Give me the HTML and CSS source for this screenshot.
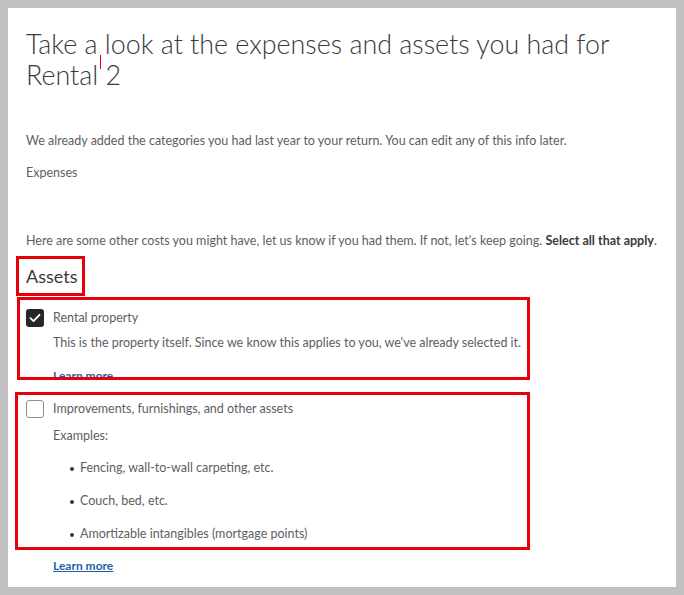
FILE: index.html
```html
<!DOCTYPE html>
<html lang="en">
<head>
  <meta charset="UTF-8">
  <title>Rental 2 - Expenses and assets</title>
  <link rel="stylesheet" href="styles.css">
</head>
<body>

<div class="panel">
  <h1 class="title">Take a look at the expenses and assets you had for Rental<span class="caret"></span> 2</h1>

  <p class="intro">We already added the categories you had last year to your return. You can edit any of this info later.</p>
  <p class="section-label">Expenses</p>

  <p class="other-costs">Here are some other costs you might have, let us know if you had them. If not, let's keep going. <strong>Select all that apply</strong>.</p>

  <h2 class="assets-heading marked">Assets</h2>

  <div class="choice choice-first marked">
    <span class="checkbox checked">
      <svg viewBox="0 0 18 18" width="18" height="18"><path d="M4.5 9.2l3 3 6-6.4" fill="none" stroke="#fff" stroke-width="1.8" stroke-linecap="round" stroke-linejoin="round"/></svg>
    </span>
    <div class="choice-body">
      <div class="choice-label">Rental property</div>
      <div class="choice-desc">This is the property itself. Since we know this applies to you, we've already selected it.</div>
      <a class="learn-more" href="#">Learn more</a>
    </div>
  </div>

  <div class="choice choice-second marked">
    <span class="checkbox"></span>
    <div class="choice-body">
      <div class="choice-label">Improvements, furnishings, and other assets</div>
      <div class="choice-desc">Examples:</div>
      <ul class="examples">
        <li>Fencing, wall-to-wall carpeting, etc.</li>
        <li>Couch, bed, etc.</li>
        <li>Amortizable intangibles (mortgage points)</li>
      </ul>
    </div>
  </div>

  <a class="learn-more learn-bottom" href="#">Learn more</a>
</div>

</body>
</html>
```

FILE: styles.css
```css
body {
  margin: 0;
  padding: 8px;
  background: #c0c0c0;
  font-family: Lato, "Open Sans", sans-serif;
  color: #5d5e63;
}
.panel {
  background: #ffffff;
  height: 579px;
  box-sizing: border-box;
  padding: 20px 18px 0;
  overflow: hidden;
}
.title {
  position: relative;
  margin: 0;
  font-size: 26.85px;
  font-weight: 300;
  line-height: 31px;
  color: #393a3d;
}
.caret {
  position: absolute;
  left: 74px;
  top: 27px;
  width: 1px;
  height: 14px;
  background: #e6000a;
}
p {
  margin: 0;
  font-size: 12.5px;
  line-height: 20px;
}
.intro {
  margin-top: 41px;
}
.section-label {
  margin-top: 12px;
}
.other-costs {
  margin-top: 48px;
  white-space: nowrap;
}
.other-costs strong {
  color: #393a3d;
  font-weight: 700;
}
.marked {
  position: relative;
}
.marked::after {
  content: "";
  position: absolute;
  border: 3px solid #e6000a;
  pointer-events: none;
}
.assets-heading {
  display: inline-block;
  margin: 13px 0 0;
  font-size: 18px;
  font-weight: 400;
  line-height: 24px;
  color: #393a3d;
}
.assets-heading::after {
  top: -8px;
  left: -10px;
  right: -8px;
  bottom: -8px;
}
.choice {
  display: flex;
  gap: 9px;
  box-sizing: border-box;
  width: 513px;
  overflow: hidden;
}
.choice::after {
  top: 0;
  left: 0;
  right: 0;
  bottom: 0;
}
.choice-first {
  margin: 9px 0 0 -9px;
  height: 83px;
  padding: 11px 0 0 9px;
}
.choice-second {
  margin: 12px 0 0 -11px;
  width: 515px;
  height: 158px;
  padding: 7px 0 0 11px;
}
.checkbox {
  flex: none;
  width: 18px;
  height: 18px;
  margin-top: 1px;
  box-sizing: border-box;
  border-radius: 3px;
  border: 1.5px solid #8d9096;
  background: #fff;
}
.checkbox.checked {
  border: none;
  background: #25272b;
}
.checkbox svg {
  display: block;
}
.choice-label {
  font-size: 12.5px;
  line-height: 20px;
}
.choice-desc {
  margin-top: 5px;
  font-size: 12.5px;
  line-height: 20px;
  white-space: nowrap;
}
.choice-second .choice-desc {
  margin-top: 7px;
}
.learn-more {
  display: inline-block;
  margin-top: 13px;
  font-size: 12px;
  line-height: 20px;
  font-weight: 700;
  color: #1f5fa8;
  text-decoration: underline;
}
.learn-bottom {
  margin: 6px 0 0 27px;
}
.examples {
  list-style: none;
  margin: 12px 0 0;
  padding: 0 0 0 27px;
}
.examples li {
  position: relative;
  font-size: 12.5px;
  line-height: 20px;
  margin-bottom: 13px;
}
.examples li::before {
  content: "";
  position: absolute;
  left: -10px;
  top: 9px;
  width: 4px;
  height: 4px;
  border-radius: 50%;
  background: #393a3d;
}
```
